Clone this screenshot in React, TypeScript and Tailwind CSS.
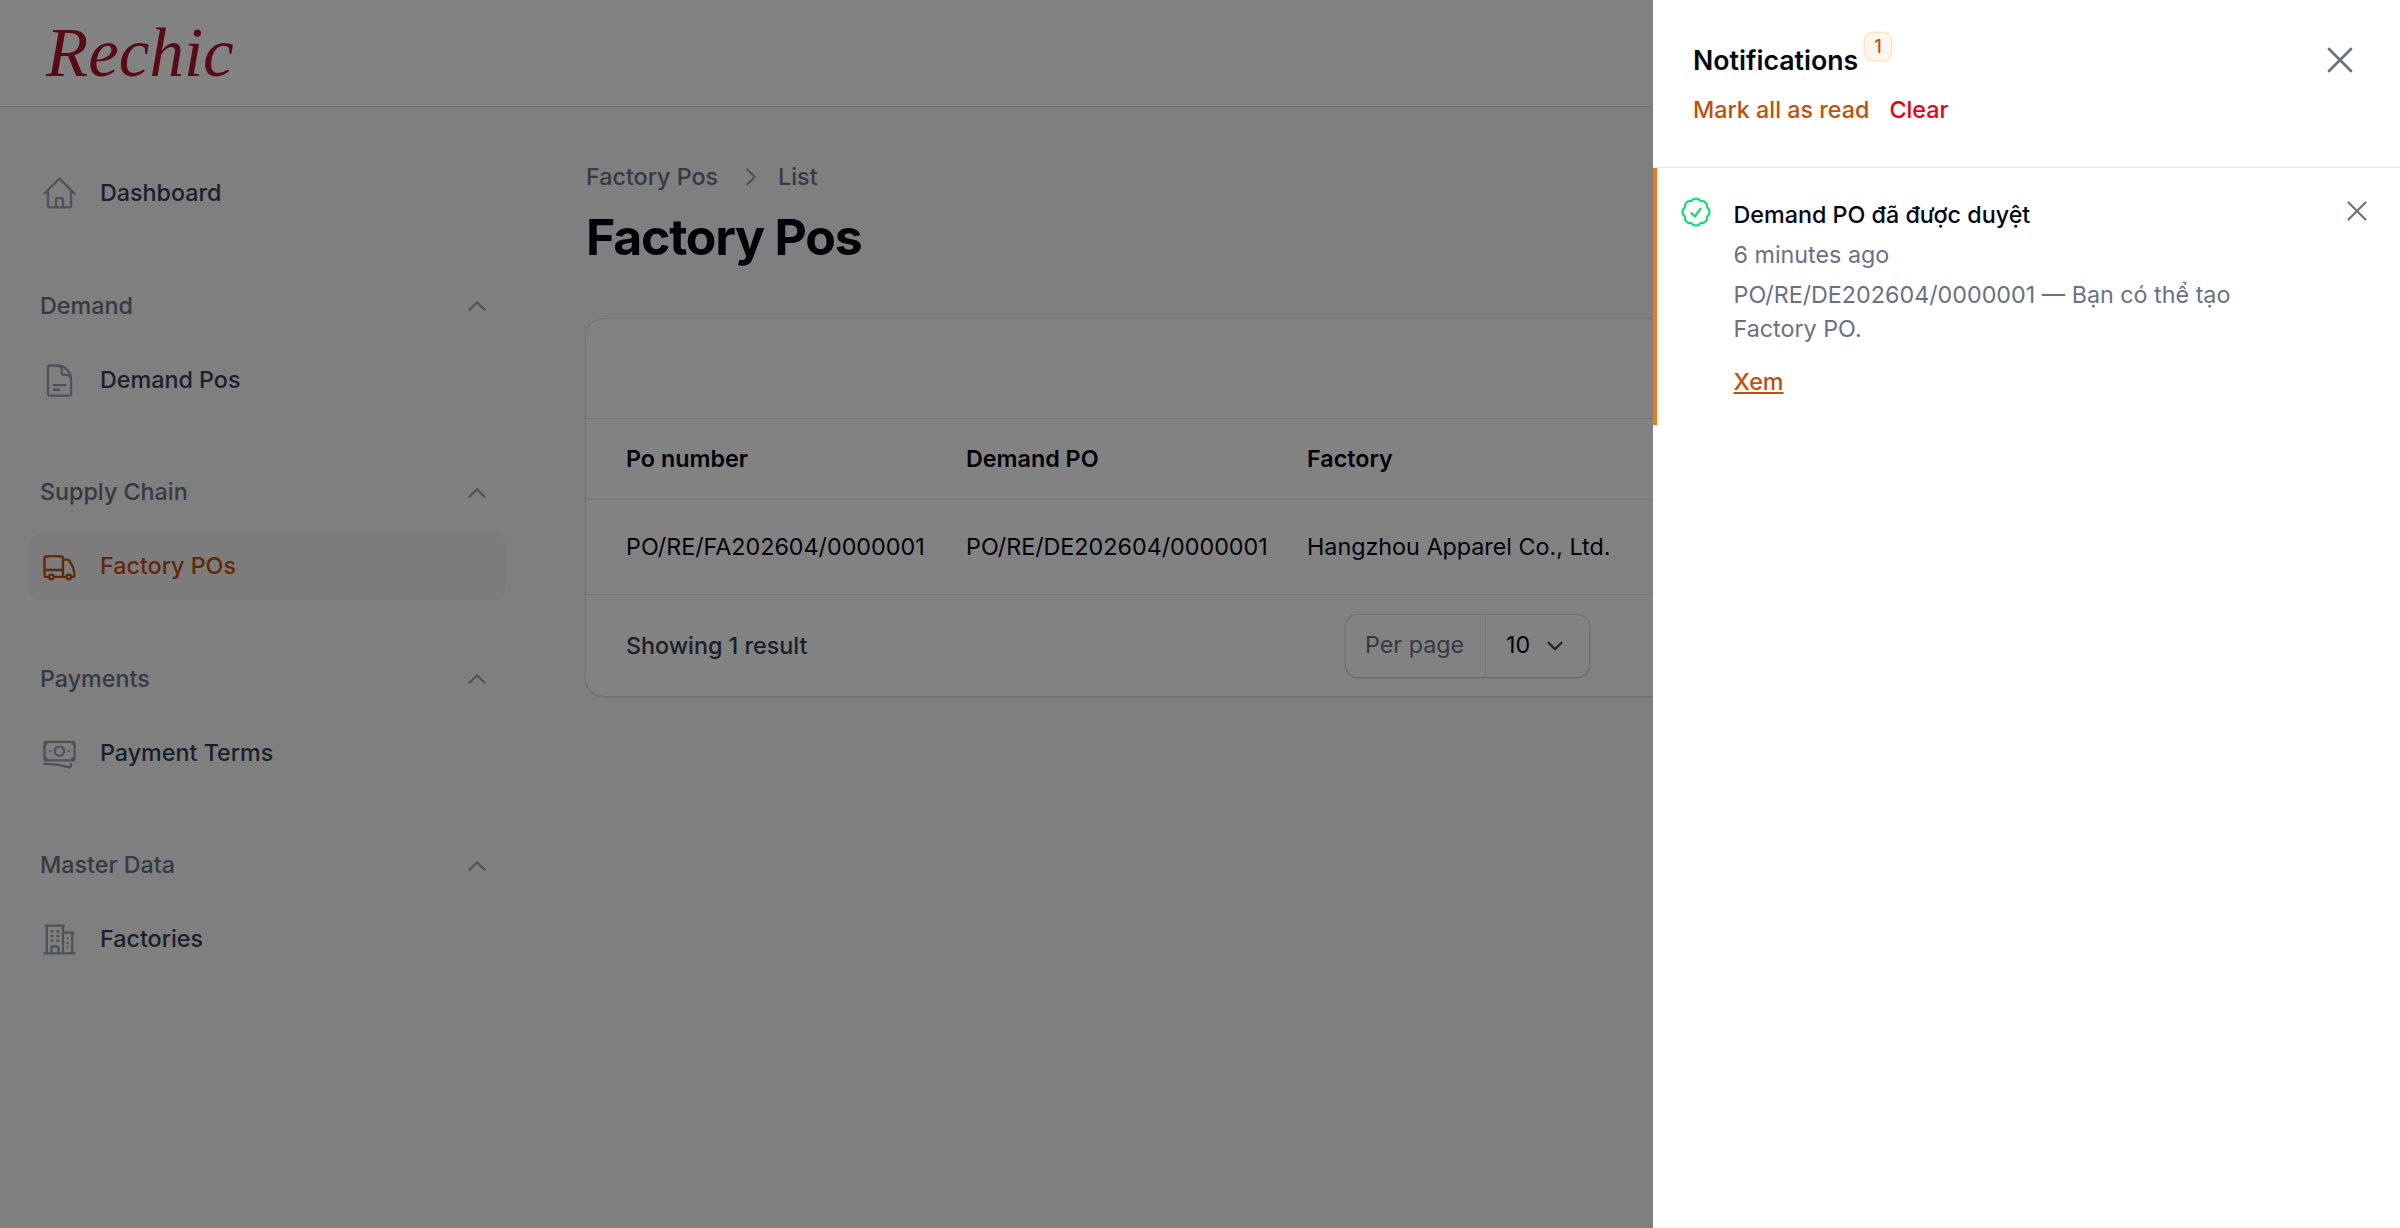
import {
  HiOutlineHome,
  HiOutlineDocumentText,
  HiOutlineTruck,
  HiOutlineBanknotes,
  HiOutlineBuildingOffice2,
  HiOutlineCheckBadge,
  HiOutlineXMark,
} from 'react-icons/hi2';
import type { ComponentType } from 'react';

interface NavGroup {
  label: string;
  item: string;
  icon: ComponentType<{ className?: string }>;
  active?: boolean;
}

const GROUPS: NavGroup[] = [
  { label: 'Demand',       item: 'Demand Pos',    icon: HiOutlineDocumentText },
  { label: 'Supply Chain', item: 'Factory POs',   icon: HiOutlineTruck, active: true },
  { label: 'Payments',     item: 'Payment Terms', icon: HiOutlineBanknotes },
  { label: 'Master Data',  item: 'Factories',     icon: HiOutlineBuildingOffice2 },
];

function Chevron({ d, className }: { d: string; className?: string }) {
  return (
    <svg viewBox="0 0 20 20" fill="none" stroke="currentColor" strokeWidth="1.5" strokeLinecap="round" strokeLinejoin="round" className={className}>
      <path d={d} />
    </svg>
  );
}

function NavRow({ label, icon: Icon, active }: { label: string; icon: NavGroup['icon']; active?: boolean }) {
  return (
    <a className={`flex h-[66px] items-center rounded-[12px] pl-[13px] pr-4 ${active ? 'bg-gray-100' : ''}`}>
      <Icon className={`size-[37px] shrink-0 ${active ? 'text-[#c2500b]' : 'text-gray-400'}`} />
      <span className={`ml-[22px] text-[23.3px] font-medium ${active ? 'text-[#c2500b]' : 'text-gray-700'}`}>{label}</span>
    </a>
  );
}

function Sidebar() {
  return (
    <aside className="flex w-[520px] shrink-0 flex-col gap-[61.6px] pl-[28px] pr-[14px] pt-[53.5px]">
      <NavRow label="Dashboard" icon={HiOutlineHome} />
      {GROUPS.map((g) => (
        <div key={g.label} className="flex flex-col gap-[23px]">
          <div className="flex h-[36px] items-center justify-between pl-[12px] pr-[14px]">
            <span className="text-[23.3px] font-medium text-gray-500">{g.label}</span>
            <Chevron d="M5 12.5 10 7.5l5 5" className="size-[30px] text-gray-400" />
          </div>
          <NavRow label={g.item} icon={g.icon} active={g.active} />
        </div>
      ))}
    </aside>
  );
}

function FactoryTable() {
  return (
    <div className="mt-[54px] rounded-[18px] bg-white shadow-sm ring-[1.5px] ring-gray-950/5">
      <div className="h-[100px] border-b-[1.5px] border-gray-200" />
      <div className="grid h-[81px] grid-cols-[340px_341px_1fr] items-center border-b-[1.5px] border-gray-200 pl-[40px] pt-[1px] text-[23.3px] font-semibold text-gray-950">
        <span>Po number</span>
        <span>Demand PO</span>
        <span>Factory</span>
      </div>
      <div className="grid h-[95px] grid-cols-[340px_341px_1fr] items-center border-b-[1.5px] border-gray-200 pl-[40px] pt-[1px] text-[23.3px] text-gray-950">
        <span>PO/RE/FA202604/0000001</span>
        <span>PO/RE/DE202604/0000001</span>
        <span>Hangzhou Apparel Co., Ltd.</span>
      </div>
      <div className="flex h-[101px] items-center pl-[40px]">
        <span className="w-[720px] pt-[1px] text-[23.3px] font-medium text-gray-700">Showing 1 result</span>
        <div className="flex h-[62px] w-[243px] items-center rounded-[12px] bg-white shadow-sm ring-[1.5px] ring-gray-950/10">
          <span className="flex h-full w-[140px] items-center border-r-[1.5px] border-gray-200 pl-[19px] text-[23.3px] text-gray-500">Per page</span>
          <span className="pl-[20px] text-[23.3px] text-gray-950">10</span>
          <Chevron d="m6 8 4 4 4-4" className="ml-[9px] size-[32px] text-gray-600" />
        </div>
      </div>
    </div>
  );
}

function NotificationsDrawer() {
  return (
    <div className="fixed inset-y-0 right-0 w-[747px] bg-white">
      <div className="border-b-[1.5px] border-gray-200 pb-[41px] pl-[40px] pr-[38px] pt-[38px]">
        <div className="flex h-[44px] items-center justify-between">
          <div className="relative">
            <h2 className="text-[26.7px] font-semibold leading-[36px] text-gray-950">Notifications</h2>
            <span className="absolute left-[172px] top-[-9px] flex h-[27px] w-[26px] items-center justify-center rounded-[8px] bg-orange-50 text-[18px] font-medium text-[#c2500b] ring-[1.5px] ring-orange-200/70">1</span>
          </div>
          <HiOutlineXMark className="size-[44px] text-gray-500" />
        </div>
        <div className="mt-[12px] flex h-[32px] items-center gap-[20px] text-[23.3px] font-medium">
          <button className="text-[#c2500b]">Mark all as read</button>
          <button className="text-[#e7000b]">Clear</button>
        </div>
      </div>

      <div className="flex border-l-[4px] border-[#ee7a10] pb-[27px] pl-[21px] pr-[26px] pt-[26px]">
        <HiOutlineCheckBadge className="size-[36px] shrink-0 text-[#10e06c]" />
        <div className="ml-[19.5px] mt-[5px] flex-1">
          <p className="text-[23.3px] font-medium leading-[32px] text-gray-950">Demand PO đã được duyệt</p>
          <p className="mt-[8px] text-[23.3px] leading-[32px] text-gray-500">6 minutes ago</p>
          <p className="mt-[7px] max-w-[540px] text-[23.3px] leading-[34px] text-gray-500">PO/RE/DE202604/0000001 — Bạn có thể tạo Factory PO.</p>
          <a className="mt-[20px] block text-[23.3px] font-medium leading-[32px] text-[#c2500b] underline">Xem</a>
        </div>
        <HiOutlineXMark className="size-[34px] shrink-0 text-gray-500" />
      </div>
    </div>
  );
}

export default function App() {
  return (
    <div className="relative flex h-screen flex-col overflow-hidden bg-gray-50 font-[family-name:Inter,sans-serif]">
      <header className="flex h-[107px] shrink-0 items-center border-b-[1.5px] border-gray-200 bg-white pl-[46px]">
        <span className="font-[family-name:'Liberation_Serif',serif] text-[69px] italic leading-none text-[#b0132e]">Rechic</span>
      </header>

      <div className="flex flex-1">
        <Sidebar />
        <main className="flex-1 pl-[66px] pr-[66px] pt-[53px]">
          <nav className="flex h-[34px] items-center text-[23.3px] font-medium text-gray-500">
            <span>Factory Pos</span>
            <Chevron d="m7.5 5 5 5-5 5" className="ml-[18px] mr-[12px] size-[30px] text-gray-400" />
            <span>List</span>
          </nav>
          <h1 className="mt-[15px] text-[50px] font-bold leading-[56px] tracking-tight text-gray-950">Factory Pos</h1>
          <FactoryTable />
        </main>
      </div>

      <div className="fixed inset-0 bg-black/[.49]" />
      <NotificationsDrawer />
    </div>
  );
}
